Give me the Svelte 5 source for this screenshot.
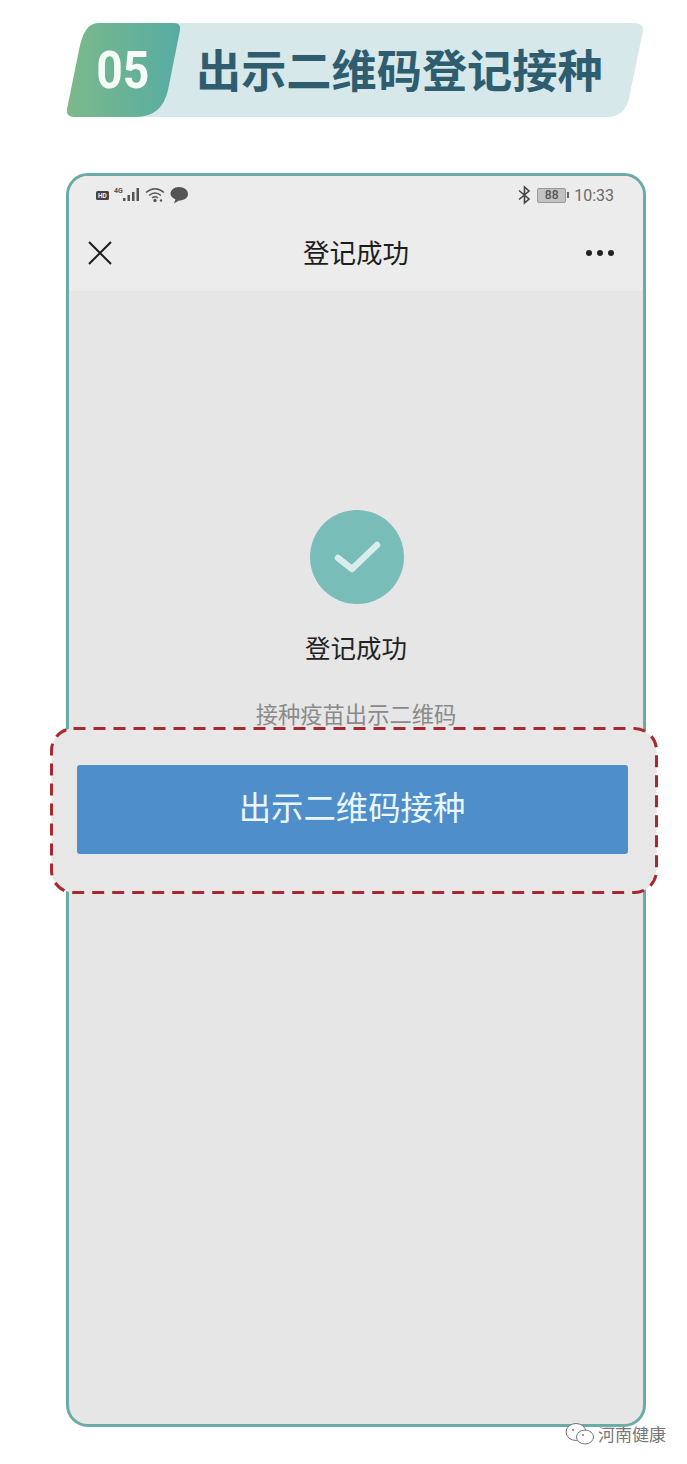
<script>
  const title = '出示二维码登记接种';
  const cjk = '"Noto Sans CJK SC", sans-serif';
</script>

<div class="page" style:--cjk={cjk}>
  <header class="banner">
    <svg class="banner-bg" width="582" height="96" viewBox="0 0 582 96">
      <defs>
        <linearGradient id="badge" x1="0" y1="0" x2="1" y2="0">
          <stop offset="0" stop-color="#7cb98a" />
          <stop offset="1" stop-color="#56aca3" />
        </linearGradient>
      </defs>
      <path d="M40 1H568Q578 1 577 9L563 76Q559 95 541 95H40Z" fill="#d6e8e9" />
      <path d="M32 1H108Q115 1 114 8L102 68Q96 95 70 95H8Q0 95 1 87L13 28Q18 1 32 1Z" fill="url(#badge)" />
    </svg>
    <span class="num">05</span>
    <h1>{title}</h1>
  </header>

  <section class="phone">
    <div class="top">
      <div class="status">
        <svg width="92" height="20" viewBox="0 0 92 20">
          <rect x="0" y="6" width="13" height="9" rx="1.500" fill="#444" />
          <text x="2" y="13" font-size="6.500" font-weight="700" fill="#eee" font-family="Roboto">HD</text>
          <text x="18" y="8" font-size="7" font-weight="700" fill="#555" font-family="Roboto">4G</text>
          <g fill="#555">
            <rect x="27" y="13" width="2.500" height="3" />
            <rect x="31.500" y="10" width="2.500" height="6" />
            <rect x="36" y="7" width="2.500" height="9" />
            <rect x="40.500" y="3" width="2.500" height="13" />
          </g>
          <g fill="none" stroke="#555" stroke-width="1.500">
            <path d="M50 7.500Q59 0 68 7.500" />
            <path d="M53 10.500Q59 5.500 65 10.500" />
            <path d="M56 13Q59 10.500 62 13" />
          </g>
          <circle cx="59" cy="15.500" r="1.700" fill="#555" />
          <circle cx="65" cy="15.500" r="1.200" fill="#555" />
          <path d="M83 2C88 2 92 5 92 9C92 13 88 15.500 83 15.500L78 18.500L79.500 14.500C76.500 13 74.500 11 74.500 9C74.500 5 78 2 83 2Z" fill="#555" />
        </svg>
        <div class="status-right">
          <svg width="13" height="20" viewBox="0 0 13 20" fill="none" stroke="#444" stroke-width="1.600">
            <path d="M1 5.500L11 14L6.500 18V2L11 6L1 14.500" />
          </svg>
          <div class="battery"><span>88</span></div>
          <i class="cap"></i>
          <span class="time">10:33</span>
        </div>
      </div>
      <div class="nav">
        <svg width="24" height="24" viewBox="0 0 24 24" stroke="#1c1c1c" stroke-width="2">
          <path d="M1 1L23 23M23 1L1 23" />
        </svg>
        <div class="nav-title">登记成功</div>
        <div class="dots"><i></i><i></i><i></i></div>
      </div>
    </div>

    <div class="body">
      <svg class="check" width="94" height="94" viewBox="0 0 94 94">
        <circle cx="47" cy="47" r="47" fill="#78bdb8" />
        <path d="M28 48L42 59L67 35" fill="none" stroke="#d9edee" stroke-width="6.500" stroke-linecap="round" stroke-linejoin="round" />
      </svg>
      <div class="done">登记成功</div>
      <div class="hint">接种疫苗出示二维码</div>
      <div class="callout">
        <svg class="dashed" width="608" height="167" viewBox="0 0 608 167">
          <rect x="1.500" y="1.500" width="605" height="164" rx="22" fill="#e7e7e7" stroke="#a82a2e" stroke-width="3" stroke-dasharray="12 8" />
        </svg>
        <button class="cta">出示二维码接种</button>
      </div>
    </div>
  </section>

  <div class="mark">
    <svg width="32" height="24" viewBox="0 0 32 24" fill="#fff" stroke="#777" stroke-width="1">
      <ellipse cx="12" cy="10" rx="10" ry="8.500" />
      <ellipse cx="21" cy="15" rx="8.500" ry="7" />
      <circle cx="9" cy="8" r="1" fill="#777" stroke="none" />
      <circle cx="19" cy="13" r="1" fill="#777" stroke="none" />
    </svg>
    <span>河南健康</span>
  </div>
</div>

<style>
  :global(body) {
    margin: 0;
    background: #fff;
  }

  .page {
    position: relative;
    width: 687px;
    height: 1464px;
    overflow: hidden;
    font-family: var(--cjk);
  }

  .banner {
    position: relative;
    display: flex;
    align-items: center;
    height: 96px;
    margin: 22px 0 0 66px;
  }

  .banner-bg {
    position: absolute;
    left: 0;
    top: 0;
  }

  .num {
    position: relative;
    width: 114px;
    padding-left: 34px;
    box-sizing: border-box;
    font: 700 52px Roboto, sans-serif;
    color: #f6fbf8;
    transform: scaleX(0.89);
    transform-origin: 0 50%;
  }

  h1 {
    position: relative;
    margin: -2px 0 0 16px;
    font-size: 45.200px;
    line-height: 1;
    font-weight: 700;
    color: #2f5d70;
    white-space: nowrap;
  }

  .phone {
    display: flex;
    flex-direction: column;
    box-sizing: border-box;
    width: 580px;
    height: 1254px;
    margin: 55px 0 0 66px;
    border: 3px solid #6aaba5;
    border-radius: 22px;
    background: #e6e6e6;
  }

  .top {
    height: 115px;
    border-radius: 19px 19px 0 0;
    background: #ececec;
  }

  .status {
    display: flex;
    justify-content: space-between;
    align-items: center;
    box-sizing: border-box;
    height: 36px;
    padding: 2px 29px 0 27px;
  }

  .status > svg {
    display: block;
  }

  .status-right {
    display: flex;
    align-items: center;
    color: #6a6a6a;
  }

  .battery {
    display: flex;
    align-items: center;
    justify-content: center;
    width: 29px;
    height: 15px;
    margin-left: 6px;
    box-sizing: border-box;
    border: 1px solid #999;
    border-radius: 2px;
    background: #c2c2c2;
    font: 500 12px Roboto, sans-serif;
    color: #555;
  }

  .cap {
    width: 2px;
    height: 6px;
    margin: 0 5px 0 1px;
    background: #666;
  }

  .time {
    font: 400 16px Roboto, sans-serif;
  }

  .nav {
    position: relative;
    display: flex;
    justify-content: space-between;
    align-items: center;
    height: 52px;
    margin-top: 15px;
    padding: 0 29px 0 19px;
  }

  .nav-title {
    position: absolute;
    left: 0;
    right: 0;
    padding-bottom: 4px;
    text-align: center;
    font-size: 26.500px;
    color: #1c1c1c;
  }

  .dots {
    display: flex;
    gap: 5px;
  }

  .dots i {
    width: 6px;
    height: 6px;
    border-radius: 50%;
    background: #222;
  }

  .body {
    display: flex;
    flex-direction: column;
    align-items: center;
    flex: 1;
  }

  .check {
    margin: 219px 0 0 2px;
  }

  .done {
    margin-top: 25px;
    font-size: 25.500px;
    line-height: 36px;
    color: #222;
  }

  .hint {
    margin-top: 32px;
    font-size: 22.300px;
    line-height: 32px;
    color: #8a8a8a;
  }

  /* the dashed box sticks out past the phone frame and covers it */
  .callout {
    position: relative;
    margin: 36px 0 0 -8px;
  }

  .dashed {
    position: absolute;
    left: -27px;
    top: -38px;
  }

  .cta {
    position: relative;
    display: block;
    width: 551px;
    height: 89px;
    padding: 0 0 8px;
    border: 0;
    border-radius: 3px;
    background: #4d8ecb;
    font-family: var(--cjk);
    font-size: 32.400px;
    color: #eaf6fb;
  }

  .mark {
    position: absolute;
    left: 564px;
    top: 1421px;
    display: flex;
    align-items: center;
    gap: 2px;
    font-size: 17px;
    color: #777;
    text-shadow: 0 0 2px #fff;
  }
</style>
